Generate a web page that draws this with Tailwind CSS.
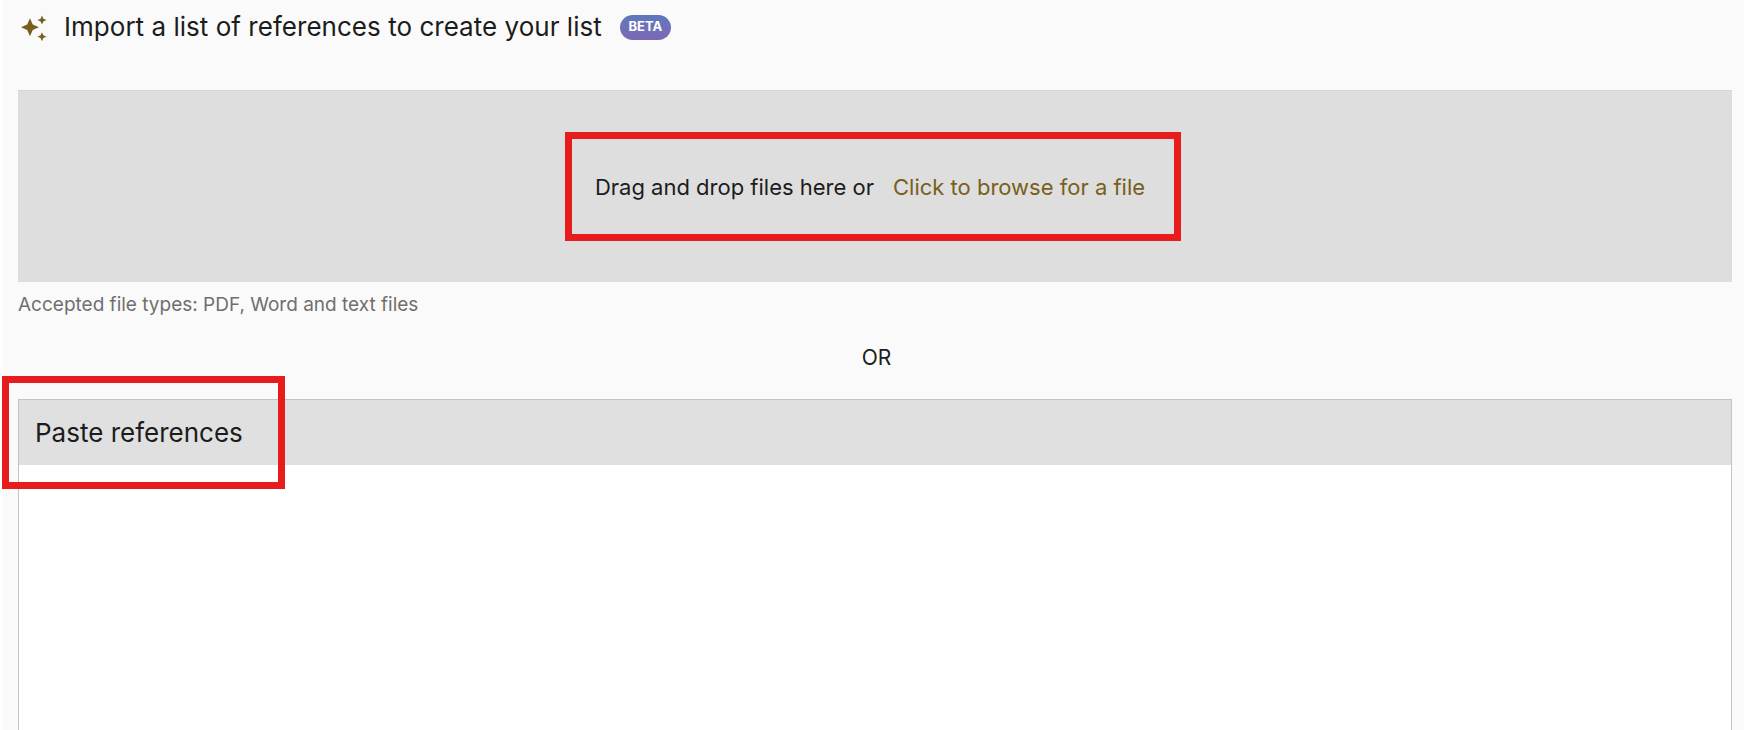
<!DOCTYPE html>
<html lang="en">
<head>
  <meta charset="UTF-8" />
  <title>Import references</title>
  <script src="https://cdn.jsdelivr.net/npm/@tailwindcss/browser@4"></script>
</head>
<body class="h-[730px] overflow-hidden bg-white font-['Inter',sans-serif] text-[#1c1c1c]">
  <div class="relative flex flex-col h-[730px] ml-[3px] bg-[#fafafa] pl-[15px] pr-[12px]">
    <!-- heading -->
    <div class="flex items-center h-[54px]">
      <svg class="w-[30px] h-[30px] ml-[2px] mr-[14px] shrink-0" viewBox="0 0 28 28" fill="#78601c">
        <path d="M9.300 5.900l2.600 5.800 5.800 2.600-5.800 2.600-2.600 5.800-2.600-5.800-5.800-2.600 5.800-2.600z"/>
        <path d="M20.500 3.300l1.300 2.900 2.900 1.300-2.900 1.300-1.300 2.900-1.300-2.900-2.900-1.300 2.900-1.300z"/>
        <path d="M20.500 18.800l1.300 2.900 2.900 1.300-2.900 1.300-1.300 2.900-1.300-2.900-2.900-1.300 2.900-1.300z"/>
      </svg>
      <h1 class="text-[26px] leading-none tracking-[0.03px]">Import a list of references to create your list</h1>
      <span class="ml-[18px] px-[8px] w-[51px] justify-center h-[25px] flex items-center rounded-full bg-gradient-to-b from-[#5c78bd] to-[#7d68b5] text-white text-[13px] font-bold">BETA</span>
    </div>

    <!-- dropzone -->
    <div class="mt-[36px] h-[192px] shrink-0 bg-[#dedede] border-t border-[#d6d6d6] pr-[10px] pt-[2px] flex items-center justify-center text-[22px]">
      <span>Drag and drop files here or</span>
      <span class="ml-[19px] text-[#78601c]">Click to browse for a file</span>
    </div>
    <p class="mt-[12px] text-[19px] leading-[22px] text-[#6f6f6f]">Accepted file types: PDF, Word and text files</p>
    <p class="mt-[30px] pl-[3px] text-center text-[21px] leading-[24px]">OR</p>

    <!-- paste panel -->
    <div class="mt-[29px] flex-1 border border-b-0 border-[#c4c4c4] bg-white">
      <div class="h-[65px] bg-[#e0e0e0] flex items-center pl-[16px] text-[26px]">Paste references</div>
    </div>

    <!-- annotations -->
    <div class="absolute left-[562px] top-[132px] w-[616px] h-[109px] border-[7px] border-[#e81c1c]"></div>
    <div class="absolute left-[-1px] top-[376px] w-[283px] h-[113px] border-[7px] border-[#e81c1c]"></div>
  </div>
</body>
</html>
